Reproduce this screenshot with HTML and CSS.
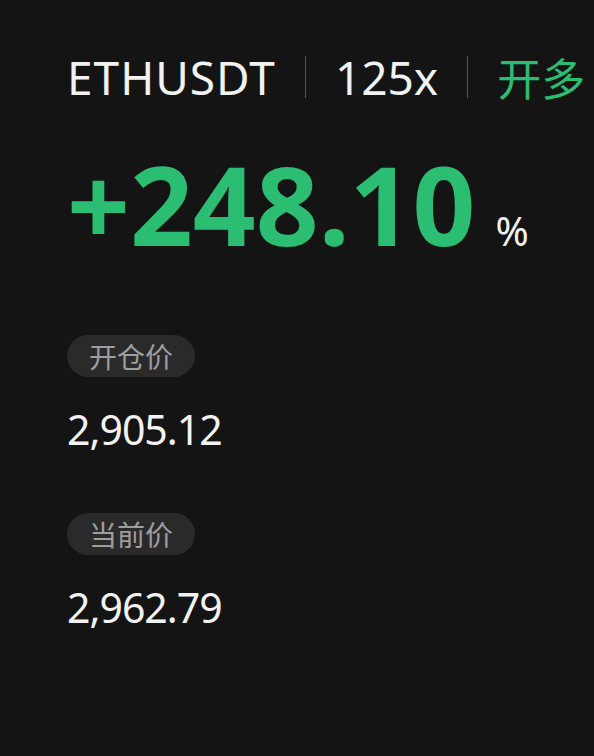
FILE: index.html
```html
<!DOCTYPE html>
<html lang="zh-CN">
<head>
    <meta charset="UTF-8">
    <meta name="viewport" content="width=device-width, initial-scale=1.0">
    <title>ETHUSDT</title>
    <link rel="stylesheet" href="styles.css">
</head>
<body>
    <div class="card">
        <div class="head">
            <span class="symbol">ETHUSDT</span>
            <span class="sep"></span>
            <span class="lever">125x</span>
            <span class="sep"></span>
            <span class="side">开多</span>
        </div>

        <div class="pnl">
            <span class="pnl-value">+248.10</span>
            <span class="pnl-unit">%</span>
        </div>

        <div class="field">
            <span class="tag">开仓价</span>
            <span class="price">2,905.12</span>
        </div>

        <div class="field">
            <span class="tag">当前价</span>
            <span class="price">2,962.79</span>
        </div>
    </div>
</body>
</html>
```

FILE: styles.css
```css
html, body {
    margin: 0;
    padding: 0;
    background-color: #141414;
}

body {
    width: 594px;
    height: 756px;
    overflow: hidden;
    font-family: "Noto Sans", "Noto Sans CJK SC", sans-serif;
    color: #f2f2f2;
}

.card {
    display: flex;
    flex-direction: column;
    align-items: flex-start;
    padding: 50px 0 0 67px;
}

.head {
    display: flex;
    align-items: center;
    height: 54px;
    font-size: 46px;
    white-space: nowrap;
}

.symbol {
    letter-spacing: 1px;
}

.sep {
    width: 1px;
    height: 42px;
    margin: 0 29px;
    background-color: #555;
}

.side {
    color: #2bbd72;
    font-size: 44px;
    font-family: "Noto Sans CJK SC", sans-serif;
}

.pnl {
    display: flex;
    align-items: baseline;
    margin-top: 44px;
    height: 110px;
}

.pnl-value {
    font-size: 110px;
    font-weight: 700;
    color: #2bbd72;
    line-height: 110px;
}

.pnl-unit {
    font-size: 40px;
    margin-left: 20px;
    margin-bottom: 8px;
}

.field {
    display: flex;
    flex-direction: column;
    align-items: flex-start;
}

.pnl + .field {
    margin-top: 77px;
}

.field + .field {
    margin-top: 60px;
}

.tag {
    height: 42px;
    line-height: 42px;
    padding: 0 22px;
    border-radius: 21px;
    background-color: #2a2a2a;
    color: #9e9e9e;
    font-size: 28px;
    font-family: "Noto Sans CJK SC", sans-serif;
}

.price {
    margin-top: 28px;
    font-size: 41px;
    line-height: 48px;
    letter-spacing: -1px;
}
```
